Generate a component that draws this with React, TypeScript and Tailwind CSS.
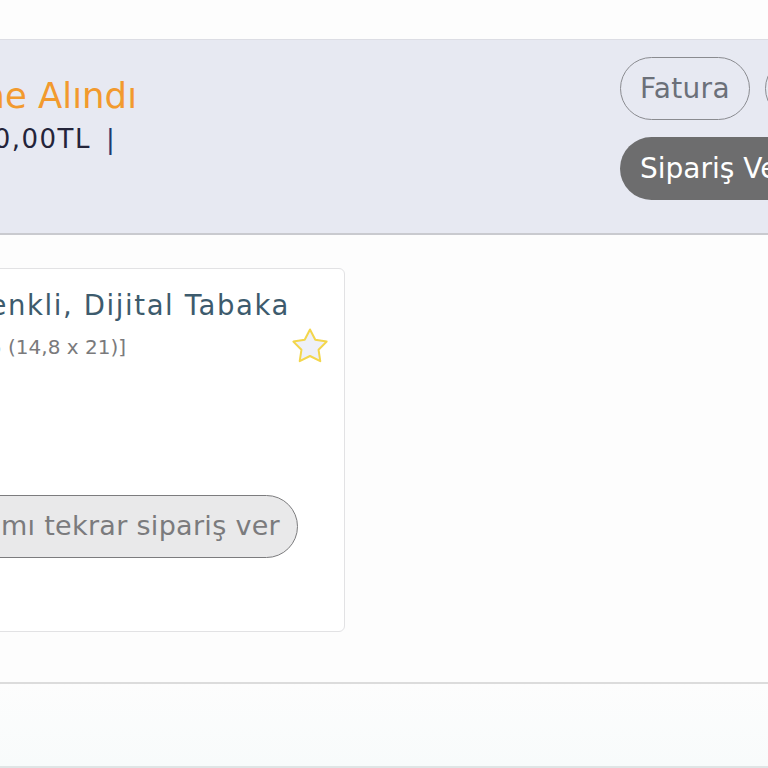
import React from 'react';

function StarIcon() {
  return (
    <svg width="38" height="36" viewBox="0 0 38 36" className="block">
      <path
        d="M19 1.5 L24.29 11.72 L35.64 13.59 L27.56 21.78 L29.29 33.16 L19 28 L8.71 33.16 L10.44 21.78 L2.36 13.59 L13.71 11.72 Z"
        fill="#eef0f8"
        stroke="#f3d64c"
        strokeWidth="2"
        strokeLinejoin="round"
      />
    </svg>
  );
}

export default function App() {
  return (
    <div className="w-[768px] h-[768px] overflow-hidden bg-[#fdfdfd] font-['DejaVu_Sans',sans-serif]">
      {/* top gap */}
      <div className="h-[39px]" />

      {/* Order header */}
      <header className="h-[196px] bg-[#e7e9f2] border-t border-[#dcdde4] border-b-2 border-b-[#c9cacf] flex justify-between">
        <div className="flex flex-col pt-[34px]">
          <div className="-ml-[300px] w-[437px] text-right whitespace-nowrap text-[35.5px] leading-[44px] text-[#f29a2e]">
            Sipariş İşleme Alındı
          </div>
          <div className="flex items-center mt-[6px]">
            <div className="-ml-[300px] w-[391px] text-right whitespace-nowrap text-[26px] tracking-[1.5px] leading-[30px] text-[#24243a]">
              Toplam: 250,00TL
            </div>
            <span className="ml-[15px] text-[26px] leading-[30px] text-[#1f3a70]">|</span>
          </div>
        </div>

        <div className="flex flex-col items-start gap-[17px] pt-[17px] w-[148px] shrink-0 overflow-hidden">
          <div className="flex gap-[15px] shrink-0">
            <button className="h-[63px] px-[19px] rounded-full border-[1.5px] border-[#8a8b90] text-[28px] tracking-[0.3px] text-[#6b7079] whitespace-nowrap">
              Fatura
            </button>
            <button className="h-[63px] px-[19px] rounded-full border-[1.5px] border-[#8a8b90] text-[28px] text-[#6b7079] whitespace-nowrap">
              Kargo Takip
            </button>
          </div>
          <button className="h-[63px] px-[20px] rounded-full bg-[#6d6d6e] text-[28px] text-white whitespace-nowrap shrink-0">
            Sipariş Verildi
          </button>
        </div>
      </header>

      {/* Order item */}
      <main className="pt-[33px] pb-[50px] border-b-2 border-[#dcdcdc]">
        <div className="-ml-[300px] w-[645px] h-[364px] border border-[#e2e2e4] rounded-md bg-white flex">
          <div className="flex-1 min-w-0 flex flex-col pt-[18px]">
            <div className="w-[589px] text-right whitespace-nowrap text-[27.5px] tracking-[1.6px] leading-[36px] text-[#3d5b6d]">
              A5 Broşür, 4+4 Renkli, Dijital Tabaka
            </div>
            <div className="w-[425px] text-right whitespace-nowrap text-[20px] leading-[28px] text-[#7a7a7c] mt-[10px]">
              [A5 (14,8 x 21)]
            </div>
            <button className="mt-[134px] w-[597px] shrink-0 h-[63px] pr-[17px] text-right rounded-full border-[1.5px] border-[#7c7c7e] bg-[#e9e9ea] text-[27px] tracking-[0.3px] text-[#7b7b7d] whitespace-nowrap">
              Bu ürünün tamamı tekrar sipariş ver
            </button>
          </div>
          <div className="pt-[59px] pr-[15px] shrink-0">
            <StarIcon />
          </div>
        </div>
      </main>

      <div className="h-[84px] bg-gradient-to-b from-[#fdfdfd] to-[#f8fbfb] border-b-2 border-[#dfe5e5]" />
    </div>
  );
}
